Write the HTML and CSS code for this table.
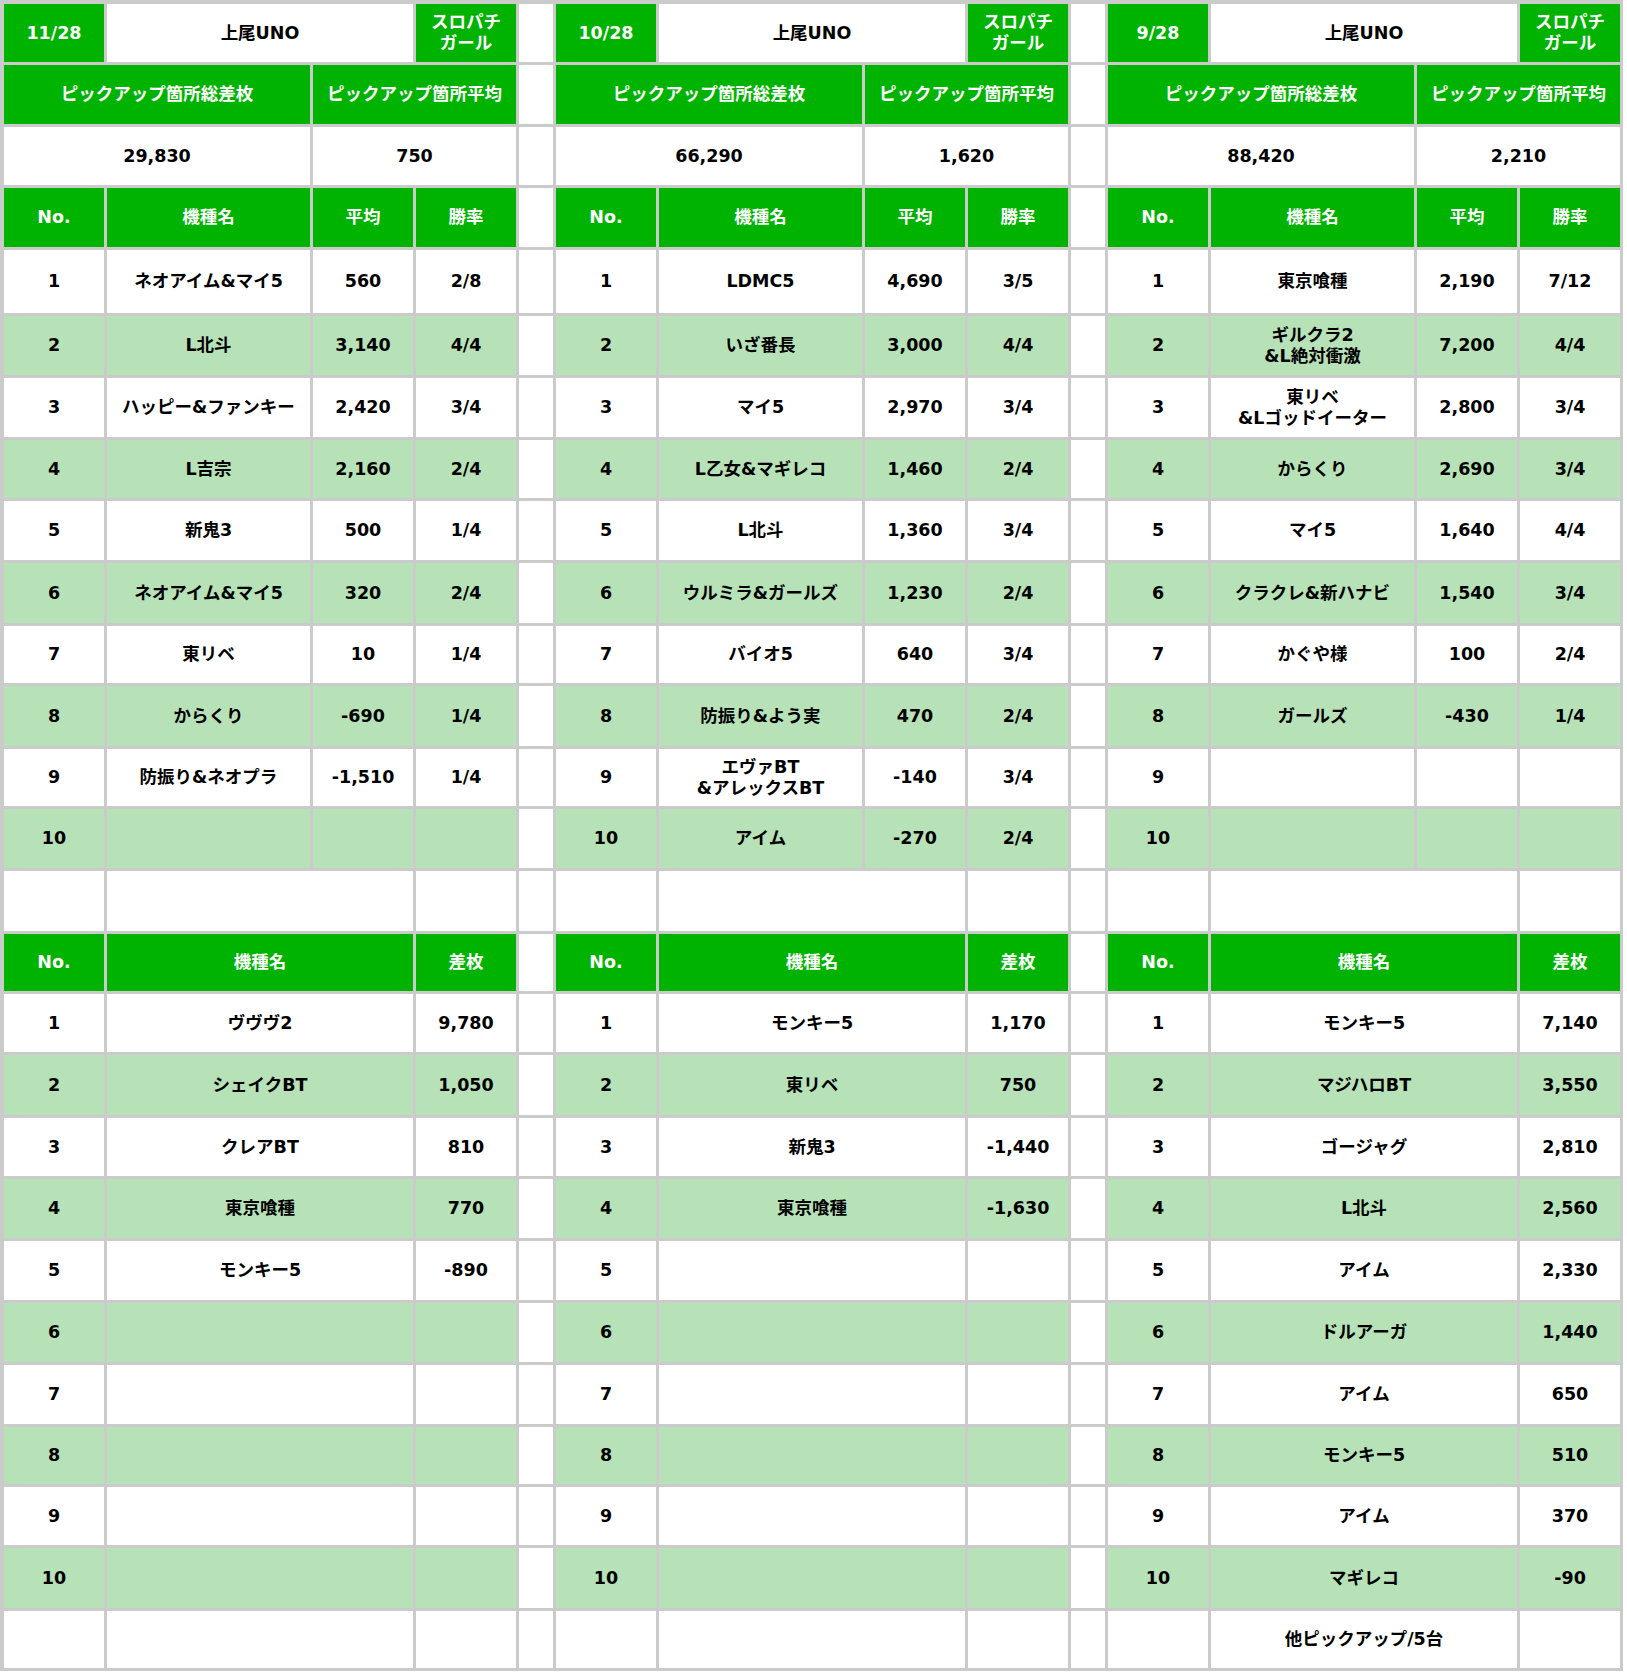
FILE: index.html
```html
<!DOCTYPE html>
<html lang="ja">
<head>
<meta charset="utf-8">
<title>スロパチガール 上尾UNO</title>
<link rel="stylesheet" href="styles.css">
</head>
<body>
<div class="sheet">
<!-- row 1 -->
<div class="c g">11/28</div><div class="c w s2">上尾UNO</div><div class="c g ml">スロパチ<br>ガール</div><div class="c sp"></div>
<div class="c g">10/28</div><div class="c w s2">上尾UNO</div><div class="c g ml">スロパチ<br>ガール</div><div class="c sp"></div>
<div class="c g">9/28</div><div class="c w s2">上尾UNO</div><div class="c g ml">スロパチ<br>ガール</div>
<!-- row 2 -->
<div class="c g s2">ピックアップ箇所総差枚</div><div class="c g s2">ピックアップ箇所平均</div><div class="c sp"></div>
<div class="c g s2">ピックアップ箇所総差枚</div><div class="c g s2">ピックアップ箇所平均</div><div class="c sp"></div>
<div class="c g s2">ピックアップ箇所総差枚</div><div class="c g s2">ピックアップ箇所平均</div>
<!-- row 3 -->
<div class="c w s2">29,830</div><div class="c w s2">750</div><div class="c sp"></div>
<div class="c w s2">66,290</div><div class="c w s2">1,620</div><div class="c sp"></div>
<div class="c w s2">88,420</div><div class="c w s2">2,210</div>
<!-- row 4 -->
<div class="c g">No.</div><div class="c g">機種名</div><div class="c g">平均</div><div class="c g">勝率</div><div class="c sp"></div>
<div class="c g">No.</div><div class="c g">機種名</div><div class="c g">平均</div><div class="c g">勝率</div><div class="c sp"></div>
<div class="c g">No.</div><div class="c g">機種名</div><div class="c g">平均</div><div class="c g">勝率</div>
<!-- data 1 -->
<div class="c w">1</div><div class="c w">ネオアイム&amp;マイ5</div><div class="c w">560</div><div class="c w">2/8</div><div class="c sp"></div>
<div class="c w">1</div><div class="c w">LDMC5</div><div class="c w">4,690</div><div class="c w">3/5</div><div class="c sp"></div>
<div class="c w">1</div><div class="c w">東京喰種</div><div class="c w">2,190</div><div class="c w">7/12</div>
<!-- data 2 -->
<div class="c l">2</div><div class="c l">L北斗</div><div class="c l">3,140</div><div class="c l">4/4</div><div class="c sp"></div>
<div class="c l">2</div><div class="c l">いざ番長</div><div class="c l">3,000</div><div class="c l">4/4</div><div class="c sp"></div>
<div class="c l">2</div><div class="c l ml">ギルクラ2<br>&amp;L絶対衝激</div><div class="c l">7,200</div><div class="c l">4/4</div>
<!-- data 3 -->
<div class="c w">3</div><div class="c w">ハッピー&amp;ファンキー</div><div class="c w">2,420</div><div class="c w">3/4</div><div class="c sp"></div>
<div class="c w">3</div><div class="c w">マイ5</div><div class="c w">2,970</div><div class="c w">3/4</div><div class="c sp"></div>
<div class="c w">3</div><div class="c w ml">東リベ<br>&amp;Lゴッドイーター</div><div class="c w">2,800</div><div class="c w">3/4</div>
<!-- data 4 -->
<div class="c l">4</div><div class="c l">L吉宗</div><div class="c l">2,160</div><div class="c l">2/4</div><div class="c sp"></div>
<div class="c l">4</div><div class="c l">L乙女&amp;マギレコ</div><div class="c l">1,460</div><div class="c l">2/4</div><div class="c sp"></div>
<div class="c l">4</div><div class="c l">からくり</div><div class="c l">2,690</div><div class="c l">3/4</div>
<!-- data 5 -->
<div class="c w">5</div><div class="c w">新鬼3</div><div class="c w">500</div><div class="c w">1/4</div><div class="c sp"></div>
<div class="c w">5</div><div class="c w">L北斗</div><div class="c w">1,360</div><div class="c w">3/4</div><div class="c sp"></div>
<div class="c w">5</div><div class="c w">マイ5</div><div class="c w">1,640</div><div class="c w">4/4</div>
<!-- data 6 -->
<div class="c l">6</div><div class="c l">ネオアイム&amp;マイ5</div><div class="c l">320</div><div class="c l">2/4</div><div class="c sp"></div>
<div class="c l">6</div><div class="c l">ウルミラ&amp;ガールズ</div><div class="c l">1,230</div><div class="c l">2/4</div><div class="c sp"></div>
<div class="c l">6</div><div class="c l">クラクレ&amp;新ハナビ</div><div class="c l">1,540</div><div class="c l">3/4</div>
<!-- data 7 -->
<div class="c w">7</div><div class="c w">東リベ</div><div class="c w">10</div><div class="c w">1/4</div><div class="c sp"></div>
<div class="c w">7</div><div class="c w">バイオ5</div><div class="c w">640</div><div class="c w">3/4</div><div class="c sp"></div>
<div class="c w">7</div><div class="c w">かぐや様</div><div class="c w">100</div><div class="c w">2/4</div>
<!-- data 8 -->
<div class="c l">8</div><div class="c l">からくり</div><div class="c l">-690</div><div class="c l">1/4</div><div class="c sp"></div>
<div class="c l">8</div><div class="c l">防振り&amp;よう実</div><div class="c l">470</div><div class="c l">2/4</div><div class="c sp"></div>
<div class="c l">8</div><div class="c l">ガールズ</div><div class="c l">-430</div><div class="c l">1/4</div>
<!-- data 9 -->
<div class="c w">9</div><div class="c w">防振り&amp;ネオプラ</div><div class="c w">-1,510</div><div class="c w">1/4</div><div class="c sp"></div>
<div class="c w">9</div><div class="c w ml">エヴァBT<br>&amp;アレックスBT</div><div class="c w">-140</div><div class="c w">3/4</div><div class="c sp"></div>
<div class="c w">9</div><div class="c w"></div><div class="c w"></div><div class="c w"></div>
<!-- data 10 -->
<div class="c l">10</div><div class="c l"></div><div class="c l"></div><div class="c l"></div><div class="c sp"></div>
<div class="c l">10</div><div class="c l">アイム</div><div class="c l">-270</div><div class="c l">2/4</div><div class="c sp"></div>
<div class="c l">10</div><div class="c l"></div><div class="c l"></div><div class="c l"></div>
<!-- blank row -->
<div class="c w"></div><div class="c w s2"></div><div class="c w"></div><div class="c sp"></div>
<div class="c w"></div><div class="c w s2"></div><div class="c w"></div><div class="c sp"></div>
<div class="c w"></div><div class="c w s2"></div><div class="c w"></div>
<!-- header 2 -->
<div class="c g">No.</div><div class="c g s2">機種名</div><div class="c g">差枚</div><div class="c sp"></div>
<div class="c g">No.</div><div class="c g s2">機種名</div><div class="c g">差枚</div><div class="c sp"></div>
<div class="c g">No.</div><div class="c g s2">機種名</div><div class="c g">差枚</div>
<!-- b1 -->
<div class="c w">1</div><div class="c w s2">ヴヴヴ2</div><div class="c w">9,780</div><div class="c sp"></div>
<div class="c w">1</div><div class="c w s2">モンキー5</div><div class="c w">1,170</div><div class="c sp"></div>
<div class="c w">1</div><div class="c w s2">モンキー5</div><div class="c w">7,140</div>
<!-- b2 -->
<div class="c l">2</div><div class="c l s2">シェイクBT</div><div class="c l">1,050</div><div class="c sp"></div>
<div class="c l">2</div><div class="c l s2">東リベ</div><div class="c l">750</div><div class="c sp"></div>
<div class="c l">2</div><div class="c l s2">マジハロBT</div><div class="c l">3,550</div>
<!-- b3 -->
<div class="c w">3</div><div class="c w s2">クレアBT</div><div class="c w">810</div><div class="c sp"></div>
<div class="c w">3</div><div class="c w s2">新鬼3</div><div class="c w">-1,440</div><div class="c sp"></div>
<div class="c w">3</div><div class="c w s2">ゴージャグ</div><div class="c w">2,810</div>
<!-- b4 -->
<div class="c l">4</div><div class="c l s2">東京喰種</div><div class="c l">770</div><div class="c sp"></div>
<div class="c l">4</div><div class="c l s2">東京喰種</div><div class="c l">-1,630</div><div class="c sp"></div>
<div class="c l">4</div><div class="c l s2">L北斗</div><div class="c l">2,560</div>
<!-- b5 -->
<div class="c w">5</div><div class="c w s2">モンキー5</div><div class="c w">-890</div><div class="c sp"></div>
<div class="c w">5</div><div class="c w s2"></div><div class="c w"></div><div class="c sp"></div>
<div class="c w">5</div><div class="c w s2">アイム</div><div class="c w">2,330</div>
<!-- b6 -->
<div class="c l">6</div><div class="c l s2"></div><div class="c l"></div><div class="c sp"></div>
<div class="c l">6</div><div class="c l s2"></div><div class="c l"></div><div class="c sp"></div>
<div class="c l">6</div><div class="c l s2">ドルアーガ</div><div class="c l">1,440</div>
<!-- b7 -->
<div class="c w">7</div><div class="c w s2"></div><div class="c w"></div><div class="c sp"></div>
<div class="c w">7</div><div class="c w s2"></div><div class="c w"></div><div class="c sp"></div>
<div class="c w">7</div><div class="c w s2">アイム</div><div class="c w">650</div>
<!-- b8 -->
<div class="c l">8</div><div class="c l s2"></div><div class="c l"></div><div class="c sp"></div>
<div class="c l">8</div><div class="c l s2"></div><div class="c l"></div><div class="c sp"></div>
<div class="c l">8</div><div class="c l s2">モンキー5</div><div class="c l">510</div>
<!-- b9 -->
<div class="c w">9</div><div class="c w s2"></div><div class="c w"></div><div class="c sp"></div>
<div class="c w">9</div><div class="c w s2"></div><div class="c w"></div><div class="c sp"></div>
<div class="c w">9</div><div class="c w s2">アイム</div><div class="c w">370</div>
<!-- b10 -->
<div class="c l">10</div><div class="c l s2"></div><div class="c l"></div><div class="c sp"></div>
<div class="c l">10</div><div class="c l s2"></div><div class="c l"></div><div class="c sp"></div>
<div class="c l">10</div><div class="c l s2">マギレコ</div><div class="c l">-90</div>
<!-- footer -->
<div class="c w"></div><div class="c w s2"></div><div class="c w"></div><div class="c sp"></div>
<div class="c w"></div><div class="c w s2"></div><div class="c w"></div><div class="c sp"></div>
<div class="c w"></div><div class="c w s2">他ピックアップ/5台</div><div class="c w"></div>
</div>
</body>
</html>
```
FILE: styles.css
```css
html, body {
  margin: 0;
  padding: 0;
  background: #ffffff;
}

.sheet {
  display: inline-grid;
  grid-template-columns:
    100px 203px 100px 100px 34px
    100px 203px 100px 100px 34px
    100px 203px 100px 100px;
  grid-template-rows:
    58px 59px 58px 59px
    63px 59px 59px 58px 59px 60px 57px 60px 57px 59px
    60px 57px
    58px 60px 58px 59px 59px 59px 59px 57px 58px 60px
    57px;
  gap: 3px;
  padding: 4px 3px 3px 4px;
  background: #cbcbcb;
  font-family: "DejaVu Sans", "Noto Sans CJK JP", sans-serif;
  font-weight: bold;
  font-size: 17.5px;
  line-height: 1.2;
  color: #000000;
}

.c {
  display: flex;
  align-items: center;
  justify-content: center;
  text-align: center;
  white-space: nowrap;
}

.s2 {
  grid-column: span 2;
}

.g {
  background: #00b300;
  color: #ffffff;
}

.w {
  background: #ffffff;
}

.l {
  background: #b7e2b8;
}

.sp {
  background: #ffffff;
}

.ml {
  line-height: 21px;
}
```
